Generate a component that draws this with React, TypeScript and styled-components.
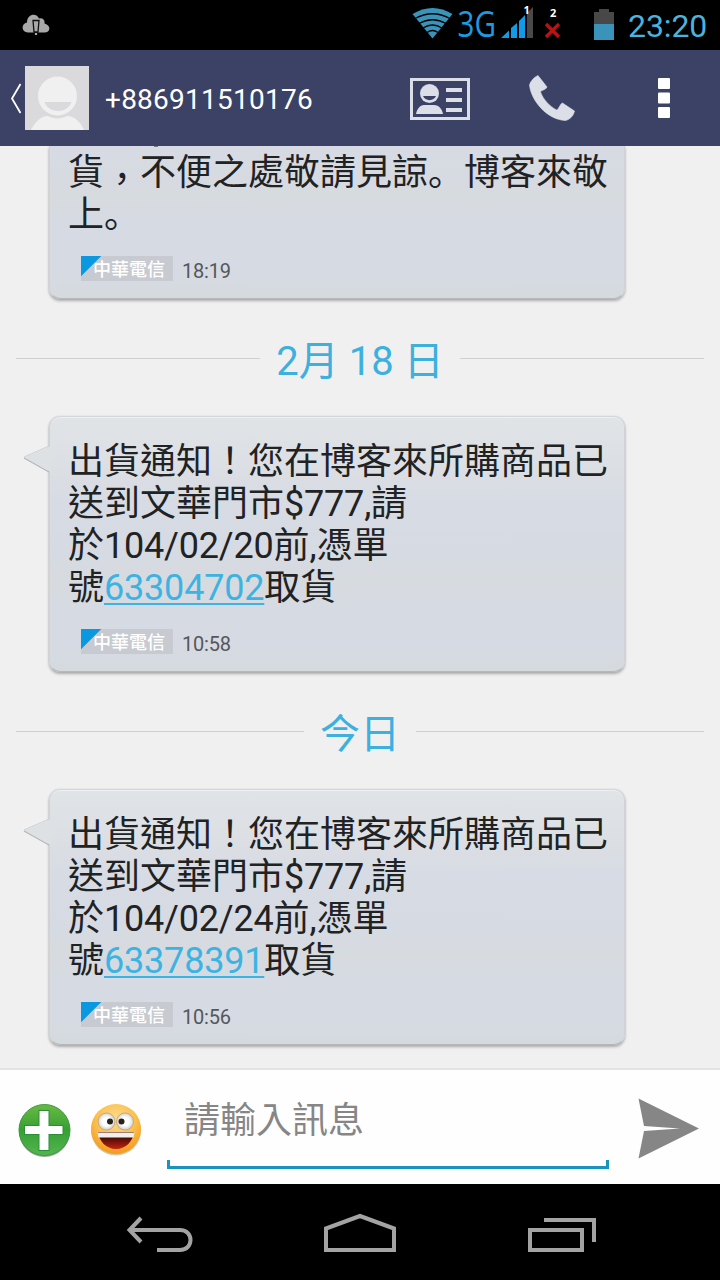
import React from "react";
import styled, { createGlobalStyle } from "styled-components";

const GlobalStyle = createGlobalStyle`
  * { box-sizing: border-box; }
  body { margin: 0; background: #000; }
`;

const Screen = styled.main`
  width: 720px;
  height: 1280px;
  display: flex;
  flex-direction: column;
  overflow: hidden;
  background: #f0f0f0;
  font-family: Roboto, "Noto Sans CJK TC", sans-serif;
  color: #212224;
`;

const StatusBar = styled.header`
  flex: none;
  height: 50px;
  display: flex;
  align-items: flex-start;
  background: #000;
`;

const StatusIcons = styled.div`
  flex: 1;
  height: 50px;
`;

const Clock = styled.time`
  width: 92px;
  height: 50px;
  line-height: 52px;
  font-size: 32px;
  letter-spacing: -0.1px;
  color: #4bb3dd;
`;

const ActionBar = styled.nav`
  flex: none;
  height: 96px;
  display: flex;
  align-items: center;
  background: #3b4265;
`;

const BackChevron = styled.svg`
  flex: none;
  width: 25px;
  height: 64px;
`;

const Title = styled.h1`
  flex: 1;
  margin: 3px 0 0 16px;
  font-size: 28px;
  line-height: 34px;
  font-weight: 400;
  letter-spacing: 0.25px;
  color: #fff;
`;

const ActionIcons = styled.svg`
  flex: none;
  width: 320px;
  height: 96px;
`;

const Thread = styled.section`
  flex: none;
  height: 922px;
  display: flex;
  flex-direction: column;
  overflow: hidden;
`;

const Bubble = styled.article<{ $continued?: boolean }>`
  position: relative;
  flex: none;
  width: 576px;
  height: ${(p) => (p.$continued ? 153 : 256)}px;
  margin-left: 49px;
  padding: ${(p) => (p.$continued ? 6 : 24)}px 0 0 18px;
  border: 1px solid #cfd3d8;
  border-top: ${(p) => (p.$continued ? "0" : "1px solid #d3d7da")};
  border-bottom-color: #b4b7bc;
  border-radius: ${(p) => (p.$continued ? "0 0 11px 11px" : "11px")};
  background: ${(p) =>
    p.$continued
      ? "linear-gradient(#d7dae3, #d6dbdf 35%, #d6dae2 48%, #d6dae2 85%, #d5dadf)"
      : "linear-gradient(#e0e4e7, #dce0e4 18%, #d7dbe3 33%, #d6dae2 55%, #d6dbdf 64%, #d6dae2 74%, #d6dae2 92%, #d5dadf)"};
  box-shadow: 0 2px 3px rgba(0, 0, 0, 0.28), 0 0 2px rgba(0, 0, 0, 0.1)${(p) =>
    p.$continued ? "" : ", inset 0 1px 0 #eef1f3"};
`;

const Tail = styled.svg`
  position: absolute;
  left: -28px;
  top: 24px;
  width: 30px;
  height: 34px;
`;

const ClippedStroke = styled.div`
  width: 4px;
  height: 1px;
  margin: -6px 0 5px 86px;
  background: #77797f;
`;

const Line = styled.div`
  height: 42px;
  line-height: 42px;
  font-size: 36px;
  white-space: nowrap;
`;

const Latin = styled.span`
  letter-spacing: -0.2px;
`;

const Link = styled.a`
  letter-spacing: -0.2px;
  color: #3db3e2;
  text-decoration: underline;
  text-decoration-thickness: 2px;
  text-underline-offset: 3px;
`;

const Comma = styled.span`
  display: inline-block;
  height: 42px;
  line-height: 56px;
  vertical-align: top;
`;

const FullStop = styled.span`
  display: inline-block;
  height: 42px;
  line-height: 36px;
  vertical-align: top;
  font-family: "Noto Sans CJK SC", sans-serif;
`;

const Meta = styled.footer`
  display: flex;
  align-items: center;
  height: 25px;
  margin: 20px 0 0 13px;
`;

const Carrier = styled.span`
  width: 92px;
  height: 25px;
  padding-left: 12px;
  line-height: 27px;
  font-size: 18px;
  font-weight: 500;
  color: #fff;
  white-space: nowrap;
  background: linear-gradient(135deg, #0a98e0 14px, #c7cad0 14.7px);
`;

const Sent = styled.time`
  margin: 6px 0 0 9px;
  font-size: 20px;
  line-height: 25px;
  letter-spacing: -0.2px;
  color: #55575b;
`;

const DateRow = styled.div`
  flex: none;
  height: 117px;
  display: flex;
  align-items: center;
  gap: 16px;
  padding: 2px 16px 0;
  &::before, &::after {
    content: "";
    flex: 1;
    height: 1px;
    background: #cfcfcf;
  }
`;

const DateText = styled.h2`
  margin: 7px 0 0;
  font-size: 40px;
  line-height: 48px;
  font-weight: 400;
  color: #3db0de;
  white-space: nowrap;
`;

const Composer = styled.form`
  flex: none;
  height: 116px;
  display: flex;
  border-top: 2px solid #e3e3e3;
  background: #fefefe;
`;

const ComposerIcons = styled.svg`
  flex: none;
  width: 167px;
  height: 114px;
`;

const Field = styled.div`
  width: 442px;
  height: 99px;
  display: flex;
  flex-direction: column;
  justify-content: space-between;
`;

const Placeholder = styled.span`
  padding: 30px 0 0 17px;
  font-size: 36px;
  line-height: 42px;
  color: #868686;
`;

const Underline = styled.span`
  height: 9px;
  border: 3px solid #1a94bf;
  border-top: 0;
`;

const SendIcon = styled.svg`
  flex: none;
  width: 111px;
  height: 114px;
`;

const SystemNav = styled.svg`
  flex: none;
  width: 720px;
  height: 96px;
  background: #000;
`;

const StatusDrawing = () => (
  <svg width="628" height="50" viewBox="0 0 628 50">
    <path d="M28 32.500c-7 0-7-9-1-10 0-9 10-10 12-4 5-1 6 3 5.500 5 7 2 6 9 0 9z" fill="#a9a9a9" />
    <path d="M33 20.500h6l-1 11.500h-4z" fill="#a9a9a9" stroke="#111" strokeWidth="1.300" />
    <path d="M34 32h4v3h-4z" fill="#111" />
    <path d="M35 33h2v2h-2z" fill="#a9a9a9" />
    <path d="M412.500 14Q432.500 2 452.500 14L432.500 38.500z" fill="#3a94ba" />
    <g fill="none" stroke="#000" strokeWidth="1.300">
      <path d="M415 18.500q17.500-9.500 35 0M419 23.500q13.500-7.500 27 0M423 28q9.500-6 19 0M427 32.500q5.500-4 11 0" />
    </g>
    <text x="457.500" y="37" fontSize="36" fontFamily="Open Sans" fill="#1e9be0" textLength="38.500" lengthAdjust="spacingAndGlyphs">3G</text>
    <path d="M501 38l8-7.500V38zM511 38V28l6-5v15zM519 38V21l6-6v23z" fill="#109be8" />
    <path d="M527 38V13l6-6v31z" fill="#494949" />
    <text x="523.500" y="14" fontSize="11" fontFamily="Open Sans" fontWeight="700" fill="#fff">1</text>
    <text x="550" y="17" fontSize="11" fontFamily="Open Sans" fontWeight="700" fill="#fff">2</text>
    <path d="M546 24l13 13M559 24l-13 13" stroke="#b51518" strokeWidth="3.200" />
    <path d="M594 12h5V9h10v3h5v12h-20z" fill="#484848" />
    <path d="M594 24h20v16h-20z" fill="#3a94ba" />
  </svg>
);

const Avatar = () => (
  <svg width="64" height="64" viewBox="0 0 64 64">
    <path d="M0 0h64v64H0z" fill="#dad9dc" />
    <path d="M6 64c4-8 10-14 17-14h19c8 0 14 7 17 14z" fill="#f0f0f0" />
    <circle cx="32.500" cy="31" r="21.500" fill="#dad9dc" />
    <circle cx="32.500" cy="30" r="19.500" fill="#f0f0f0" />
    <path d="M19.500 36h27c-4 12-23 12-27 0z" fill="#dad9dc" />
  </svg>
);

const TailShape = () => (
  <Tail viewBox="0 0 30 34">
    <path d="M29 5L2 16.500 29 31z" fill="#dde1e4" />
    <path d="M27 5L2 16" fill="none" stroke="#cdd1d4" />
    <path d="M2 17L27 31" fill="none" stroke="#b4b8bc" strokeWidth="1.400" />
  </Tail>
);

const MetaRow = ({ time }: { time: string }) => (
  <Meta>
    <Carrier>中華電信</Carrier>
    <Sent>{time}</Sent>
  </Meta>
);

interface PickupProps {
  date: string;
  code: string;
  time: string;
}

const PickupMessage = ({ date, code, time }: PickupProps) => (
  <Bubble>
    <TailShape />
    <Line>出貨通知！您在博客來所購商品已</Line>
    <Line>送到文華門市<Latin>$777,</Latin>請</Line>
    <Line>於<Latin>{date}</Latin>前<Latin>,</Latin>憑單</Line>
    <Line>號<Link>{code}</Link>取貨</Line>
    <MetaRow time={time} />
  </Bubble>
);

export default function App() {
  return (
    <Screen>
      <GlobalStyle />
      <StatusBar>
        <StatusIcons><StatusDrawing /></StatusIcons>
        <Clock>23:20</Clock>
      </StatusBar>
      <ActionBar>
        <BackChevron viewBox="0 0 25 64">
          <path d="M20.500 18L12 32.500l8.500 14.500" fill="none" stroke="#fff" strokeWidth="1.800" />
        </BackChevron>
        <Avatar />
        <Title>+886911510176</Title>
        <ActionIcons viewBox="400 50 320 96">
          <path d="M411.500 79.500h57v39h-57z" fill="none" stroke="#dcdfe8" strokeWidth="3" />
          <g fill="#dcdfe8">
            <circle cx="429.500" cy="93.500" r="9.500" />
            <path d="M416 114c1-5 4-9 8-9h10c5 0 8 4 9 9zM446 88h16v4h-16zM446 98h16v4h-16zM446 108h16v4h-16z" />
            <path d="M538 75.500l9 11.500c-1 3-6 3-6.500 5 3 8 9 14 16 18 3-1 3-6 6-7l12 8c-1 5-5 9-9.500 9.500-18-1-34-20-35.500-35.500 1-4 5-8 8.500-9.500z" stroke="#dcdfe8" strokeWidth=".6" strokeLinejoin="round" />
          </g>
          <path d="M423 96h13c-2 5.500-11 5.500-13 0z" fill="#3b4265" />
          <g fill="#fff">
            <rect x="658" y="78" width="12" height="11" rx="1" />
            <rect x="658" y="92.500" width="12" height="11" rx="1" />
            <rect x="658" y="107" width="12" height="11" rx="1" />
          </g>
        </ActionIcons>
      </ActionBar>
      <Thread>
        <Bubble $continued>
          <ClippedStroke />
          <Line>貨<Comma>，</Comma>不便之處敬請見諒<FullStop>。</FullStop>博客來敬</Line>
          <Line>上<FullStop>。</FullStop></Line>
          <MetaRow time="18:19" />
        </Bubble>
        <DateRow><DateText>2月 18 日</DateText></DateRow>
        <PickupMessage date="104/02/20" code="63304702" time="10:58" />
        <DateRow><DateText>今日</DateText></DateRow>
        <PickupMessage date="104/02/24" code="63378391" time="10:56" />
      </Thread>
      <Composer>
        <ComposerIcons viewBox="0 1070 167 114">
          <defs>
            <linearGradient id="green" x1="0" y1="0" x2="0" y2="1">
              <stop offset="0" stopColor="#6cb944" />
              <stop offset=".5" stopColor="#35a033" />
              <stop offset="1" stopColor="#55b551" />
            </linearGradient>
            <radialGradient id="face" cx=".5" cy=".3" r=".7">
              <stop offset="0" stopColor="#fbdc92" />
              <stop offset=".55" stopColor="#fcc04e" />
              <stop offset="1" stopColor="#f39a1d" />
            </radialGradient>
            <radialGradient id="eye">
              <stop offset=".5" stopColor="#fff" />
              <stop offset="1" stopColor="#d0d0cc" />
            </radialGradient>
            <linearGradient id="mouth" x1="0" y1="0" x2="0" y2="1">
              <stop offset="0" stopColor="#4d0c05" />
              <stop offset=".35" stopColor="#4d0c05" />
              <stop offset="1" stopColor="#c52313" />
            </linearGradient>
          </defs>
          <circle cx="44.500" cy="1131.500" r="25.500" fill="#98a898" />
          <circle cx="44.500" cy="1130" r="25.500" fill="url(#green)" stroke="#3a9a3c" />
          <path d="M39.500 1111h9v15h14v8h-14v16h-9v-16H25v-8h14.500z" fill="#fff" stroke="#2b8f38" strokeWidth="2" paintOrder="stroke" />
          <circle cx="116" cy="1130.500" r="25" fill="#d8c4a6" />
          <circle cx="116" cy="1129" r="25" fill="url(#face)" />
          <circle cx="106.500" cy="1121.500" r="8.500" fill="url(#eye)" stroke="#b99b63" strokeWidth=".7" />
          <circle cx="125" cy="1121.500" r="8.500" fill="url(#eye)" stroke="#b99b63" strokeWidth=".7" />
          <circle cx="110" cy="1121.500" r="3" fill="#29221c" />
          <circle cx="121.500" cy="1121.500" r="3" fill="#29221c" />
          <path d="M98 1132h36c-1 9-8 17-18 17s-17-8-18-17z" fill="url(#mouth)" />
          <path d="M97.500 1132.500h37l-1 5h-35z" fill="#f2f0ed" />
        </ComposerIcons>
        <Field>
          <Placeholder>請輸入訊息</Placeholder>
          <Underline />
        </Field>
        <SendIcon viewBox="609 1070 111 114">
          <path d="M638.500 1098.500L699 1128.500l-60.500 30 5.500-27.500 36-2.500-36-2.500z" fill="#868686" />
        </SendIcon>
      </Composer>
      <SystemNav viewBox="0 1184 720 96">
        <g fill="none" stroke="#a3a3a3" strokeWidth="4">
          <path d="M141 1218l-11.500 12 11.500 12M130 1230h50c14 0 14 20 0 20h-23" />
          <path d="M326 1250v-21.500l34-12.500 34 12.500V1250z" />
          <path d="M530 1230h52v20h-52zM544 1220h50v22" />
        </g>
      </SystemNav>
    </Screen>
  );
}
